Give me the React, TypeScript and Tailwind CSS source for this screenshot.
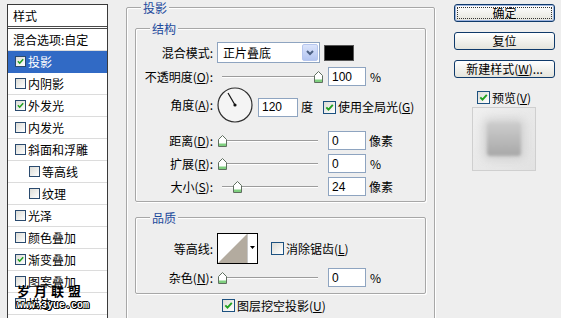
import React from "react";

const leftRows: { t: string; c?: boolean; sel?: boolean; indent?: boolean }[] = [
  { t: "投影", c: true, sel: true },
  { t: "内阴影" },
  { t: "外发光", c: true },
  { t: "内发光" },
  { t: "斜面和浮雕" },
  { t: "等高线", indent: true },
  { t: "纹理", indent: true },
  { t: "光泽" },
  { t: "颜色叠加" },
  { t: "渐变叠加", c: true },
  { t: "图案叠加" },
  { t: "描边" },
];

function Check({ checked, small }: { checked?: boolean; small?: boolean }) {
  return (
    <span
      className={
        small
          ? "inline-flex shrink-0 items-center justify-center w-[11px] h-[11px] border border-[#2a4a6e] bg-gradient-to-br from-[#dcdcd6] to-white"
          : "inline-flex shrink-0 items-center justify-center w-[13px] h-[13px] border border-[#1c5180] bg-gradient-to-br from-[#dcdcd6] to-white"
      }
    >
      {checked && (
        <svg viewBox="0 0 11 11" className="w-full h-full">
          <path d="M2.3 5.3 L4.5 7.6 L8.8 2.8" fill="none" stroke="#21a121" strokeWidth="1.9" />
        </svg>
      )}
    </span>
  );
}

function U({ c }: { c: string }) {
  return <span className="underline underline-offset-[1px]">{c}</span>;
}

function Label({ children }: { children: React.ReactNode }) {
  return <span className="w-[77px] shrink-0 text-right whitespace-nowrap">{children}</span>;
}

function Slider({ pct, className }: { pct: number; className?: string }) {
  const left = 2 + (pct / 100) * 96 - 4.5;
  return (
    <div className={"relative w-[100px] h-[19px] shrink-0 " + (className ?? "")}>
      <div className="absolute left-[2px] right-[2px] top-[9px] h-px bg-[#9c9c9c] shadow-[0_1px_0_#ffffff]" />
      <svg
        width="9"
        height="12"
        viewBox="0 0 9 12"
        className="absolute top-[4px]"
        style={{ left }}
      >
        <path d="M0.5 4.5 L4.5 0.5 L8.5 4.5 L8.5 11.5 L0.5 11.5 Z" fill="#ffffff" stroke="#5f6f5f" />
        <rect x="1" y="8.5" width="7" height="2.5" fill="#7fcf7f" />
      </svg>
    </div>
  );
}

function NumBox({ v, className }: { v: string; className?: string }) {
  return (
    <div
      className={
        "h-[19px] shrink-0 border border-[#8ea4c0] bg-white flex items-center pl-[3px] font-['Liberation_Sans',sans-serif] text-[12px] " +
        (className ?? "w-[38px]")
      }
    >
      {v}
    </div>
  );
}

function Frame({
  title,
  className,
  children,
}: {
  title: string;
  className: string;
  children: React.ReactNode;
}) {
  return (
    <div
      className={
        "relative shrink-0 border border-[#a7a7a7] rounded-[2px] shadow-[1px_1px_0_#ffffff,inset_1px_1px_0_#ffffff] " +
        className
      }
    >
      <span className="absolute -top-[7px] left-[14px] px-[2px] bg-[#eeeeee] text-[#1d4a9c] leading-[14px]">
        {title}
      </span>
      {children}
    </div>
  );
}

function Btn({ children, def }: { children: React.ReactNode; def?: boolean }) {
  return (
    <div
      className={
        "h-[18px] w-[101px] rounded-[3px] border border-[#0f3a6a] bg-gradient-to-b from-white to-[#e4e4dc] flex items-center justify-center p-[2px] " +
        (def ? "shadow-[inset_0_0_0_1px_#9db4e0]" : "")
      }
    >
      <div
        className={
          "w-full h-full flex items-center justify-center " +
          (def ? "border border-dotted border-[#333]" : "")
        }
      >
        {children}
      </div>
    </div>
  );
}

export default function App() {
  return (
    <div className="relative flex w-[561px] h-[318px] overflow-hidden bg-[#eeeeee] text-[12px] leading-none text-black font-['Noto_Sans_CJK_SC',sans-serif]">
      {/* Left style list */}
      <div className="ml-[7px] mt-[4px] w-[101px] h-[340px] shrink-0 border border-[#3a3a3a] bg-white">
        <div className="h-[24px] border-b-[3px] border-double border-[#4a4a4a] flex items-center pl-[5px]">
          样式
        </div>
        <div className="h-[22px] border-b border-[#dcdcdc] flex items-center pl-[5px]">混合选项:自定</div>
        {leftRows.map((r) => (
          <div
            key={r.t}
            className={
              "h-[22px] border-b flex items-center gap-[2px] " +
              (r.indent ? "pl-[21px] " : "pl-[7px] ") +
              (r.sel ? "bg-[#316ac5] text-white border-[#316ac5]" : "border-[#dcdcdc]")
            }
          >
            <Check small checked={r.c} />
            <span>{r.t}</span>
          </div>
        ))}
      </div>

      {/* Middle */}
      <Frame title="投影" className="ml-[18px] mt-[7px] w-[309px] h-[340px] flex flex-col">
        <Frame title="结构" className="ml-[8px] mt-[20px] w-[291px] h-[174px] flex flex-col">
          {/* blend mode */}
          <div className="mt-[13px] h-[21px] flex items-center">
            <Label>混合模式:</Label>
            <div className="ml-[4px] w-[103px] h-[21px] border border-[#8ea4c0] bg-white flex items-center">
              <span className="pl-[5px] flex-1">正片叠底</span>
              <div className="mr-[1px] w-[16px] h-[17px] rounded-[2px] border border-[#b6c6ee] bg-gradient-to-b from-[#dbe4fb] to-[#b3c5f1] flex items-center justify-center">
                <svg width="8" height="6" viewBox="0 0 8 6">
                  <path d="M1 1 L4 4 L7 1" fill="none" stroke="#4d6185" strokeWidth="2" />
                </svg>
              </div>
            </div>
            <div className="ml-[4px] w-[30px] h-[16px] bg-black border border-[#555]" />
          </div>
          {/* opacity */}
          <div className="mt-[4px] h-[19px] flex items-center">
            <Label>
              不透明度(<U c="O" />):
            </Label>
            <Slider pct={100} className="ml-[7px]" />
            <NumBox v="100" className="ml-[8px] w-[38px]" />
            <span className="ml-[4px]">%</span>
          </div>
          {/* angle */}
          <div className="mt-[1px] h-[35px] flex items-center">
            <Label>
              角度(<U c="A" />):
            </Label>
            <svg width="36" height="36" viewBox="0 0 36 36" className="ml-[4px] shrink-0">
              <circle cx="18" cy="18" r="17" fill="#f4f4f4" stroke="#2e2e2e" strokeWidth="1.2" />
              <line x1="18" y1="18" x2="11" y2="6" stroke="#111" strokeWidth="1.2" />
              <circle cx="18" cy="18" r="1.6" fill="#111" />
            </svg>
            <NumBox v="120" className="ml-[5px] mt-[5px] w-[40px]" />
            <span className="ml-[3px] mt-[5px]">度</span>
            <span className="ml-[10px] mt-[5px] flex items-center gap-[2px]">
              <Check checked />
              <span>
                使用全局光(<U c="G" />)
              </span>
            </span>
          </div>
          {/* distance */}
          <div className="mt-[9px] h-[19px] flex items-center">
            <Label>
              距离(<U c="D" />):
            </Label>
            <Slider pct={0} className="ml-[7px]" />
            <NumBox v="0" className="ml-[8px] w-[38px]" />
            <span className="ml-[3px]">像素</span>
          </div>
          {/* spread */}
          <div className="mt-[4px] h-[19px] flex items-center">
            <Label>
              扩展(<U c="R" />):
            </Label>
            <Slider pct={0} className="ml-[7px]" />
            <NumBox v="0" className="ml-[8px] w-[38px]" />
            <span className="ml-[4px]">%</span>
          </div>
          {/* size */}
          <div className="mt-[4px] h-[19px] flex items-center">
            <Label>
              大小(<U c="S" />):
            </Label>
            <Slider pct={16} className="ml-[7px]" />
            <NumBox v="24" className="ml-[8px] w-[38px]" />
            <span className="ml-[3px]">像素</span>
          </div>
        </Frame>

        <Frame title="品质" className="ml-[8px] mt-[15px] w-[291px] h-[77px] flex flex-col">
          <div className="mt-[15px] h-[31px] flex items-center">
            <Label>等高线:</Label>
            <svg width="41" height="31" viewBox="0 0 41 31" className="ml-[4px] shrink-0">
              <rect x="0.5" y="0.5" width="40" height="30" fill="#ffffff" stroke="#000" />
              <polygon points="1,30 30,1 30,30" fill="#b3ab9f" />
              <line x1="30.5" y1="1" x2="30.5" y2="30" stroke="#c8c8c8" />
              <polygon points="33,13 38,13 35.5,16" fill="#000" />
            </svg>
            <span className="ml-[13px] flex items-center gap-[2px]">
              <Check />
              <span className="whitespace-nowrap">
                消除锯齿(<U c="L" />)
              </span>
            </span>
          </div>
          <div className="mt-[4px] h-[19px] flex items-center">
            <Label>
              杂色(<U c="N" />):
            </Label>
            <Slider pct={0} className="ml-[7px]" />
            <NumBox v="0" className="ml-[8px] w-[38px]" />
            <span className="ml-[4px]">%</span>
          </div>
        </Frame>

        <div className="ml-[95px] mt-[5px] h-[13px] flex items-center gap-[2px]">
          <Check checked />
          <span>
            图层挖空投影(<U c="U" />)
          </span>
        </div>
      </Frame>

      {/* Right column */}
      <div className="ml-[19px] mt-[4px] w-[101px] shrink-0 flex flex-col">
        <Btn def>确定</Btn>
        <div className="mt-[10px]">
          <Btn>复位</Btn>
        </div>
        <div className="mt-[10px]">
          <Btn>
            新建样式(<U c="W" />)...
          </Btn>
        </div>
        <div className="mt-[13px] ml-[23px] h-[13px] flex items-center gap-[2px]">
          <Check checked />
          <span>
            预览(<U c="V" />)
          </span>
        </div>
        <div className="ml-[18px] mt-[3px] w-[64px] h-[64px] border border-[#cfcfcf] bg-gradient-to-br from-[#f0f0f0] to-[#e2e2e2] flex items-center justify-center overflow-hidden">
          <div className="w-[34px] h-[34px] rounded-[3px] bg-gradient-to-b from-[#cdcdcd] to-[#a8a8a8] blur-[1.5px] shadow-[0_0_8px_4px_#d2d2d2]" />
        </div>
      </div>

      {/* Watermark overlay */}
      <div className="absolute left-[17px] top-[283px] pointer-events-none">
        <div className="font-bold text-[13px] tracking-[4px] leading-[15px] text-black">岁月联盟</div>
        <div className="mt-[2px] font-['Liberation_Mono',monospace] font-bold text-[10px] leading-[12px] text-white [text-shadow:1px_0_#000,-1px_0_#000,0_1px_#000,0_-1px_#000,1px_1px_#000,-1px_-1px_#000]">
          www.3yue.com
        </div>
      </div>
    </div>
  );
}
